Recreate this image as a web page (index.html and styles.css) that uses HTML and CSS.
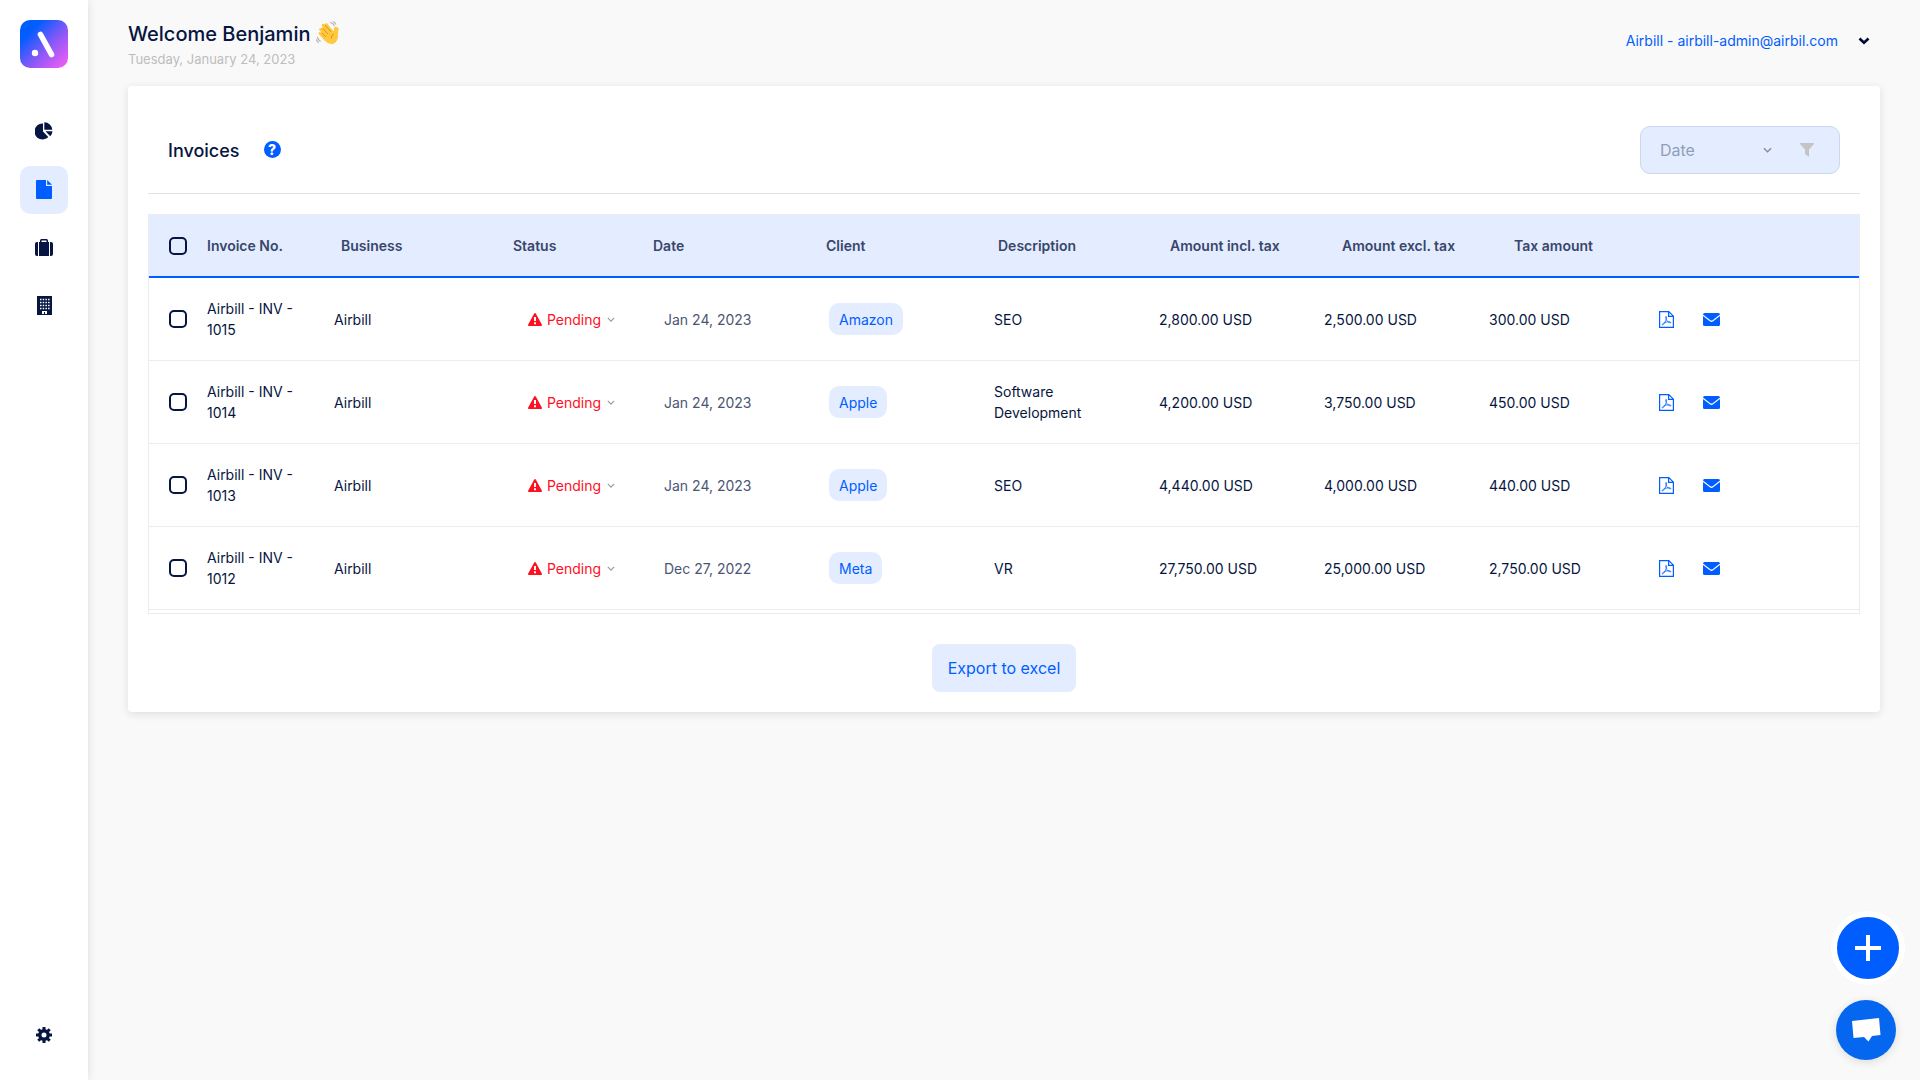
FILE: index.html
```html
<!DOCTYPE html>
<html lang="en">
<head>
<meta charset="utf-8">
<meta name="viewport" content="width=device-width, initial-scale=1">
<title>Airbill - Invoices</title>
<link rel="stylesheet" href="styles.css">
</head>
<body>
<svg class="sprite" aria-hidden="true">
  <symbol id="caret" viewBox="0 0 10 6"><path d="M1 1l4 4 4-4" fill="none" stroke="currentColor" stroke-width="1.5"/></symbol>
  <symbol id="warning" viewBox="0 0 14 13"><path d="M6.2.6Q7-.6 7.800.6L13.800 11.500Q14.200 13 13 13H1Q-.2 13 .2 11.500Z" fill="currentColor"/><path d="M6 4h2v4H6zM6 9.200h2v2H6z" fill="#fff"/></symbol>
  <symbol id="pdf" viewBox="0 0 15 17"><path d="M.6.6h9.200l4.600 4.600v11.200H.6zM9.600.6v4.800h4.800" fill="none" stroke="currentColor" stroke-width="1.200"/><path d="M7 5.500c1.300 0 .2 3.400-1 5.600-1.100 2-2.200 3.300-2.700 2.700-.5-.7 2-2.300 4.400-2.800 2.200-.5 4.200-.3 4.200.5 0 1-2.900-.1-4-1.900C7 8 6.200 5.500 7 5.500z" fill="none" stroke="currentColor" stroke-width=".8"/></symbol>
  <symbol id="mail" viewBox="0 0 17 13"><path d="M1.500 0h14A1.500 1.500 0 0 1 17 1.500L9.600 7.200Q8.500 8 7.400 7.200L0 1.500A1.500 1.500 0 0 1 1.500 0z" fill="currentColor"/><path d="M0 3l6.800 5.300q1.700 1.200 3.400 0L17 3v8.500a1.500 1.500 0 0 1-1.500 1.500h-14A1.500 1.500 0 0 1 0 11.500z" fill="currentColor"/></symbol>
</svg>
<div class="app">
  <aside class="sidebar">
    <a class="logo" href="#" aria-label="Airbill home">
      <svg viewBox="0 0 48 48" width="48" height="48"><path d="M20.500 14.500L31.500 34.500" stroke="#fff" stroke-width="5.600" stroke-linecap="round"/><circle cx="15" cy="33" r="3.200" fill="#fff"/></svg>
    </a>
    <nav class="nav" aria-label="Main">
      <a class="nav-item" href="#" aria-label="Dashboard"><svg viewBox="0 0 18 18" width="18" height="18" fill="currentColor"><path d="M8 1.500V9.400l5.300 5.600A8 8 0 1 1 8 1.500z"/><path d="M9.300.2a8 8 0 0 1 8 7.600H9.300zM10.500 9.200h7a8 8 0 0 1-2.300 5z"/></svg></a>
      <a class="nav-item active" href="#" aria-label="Invoices" aria-current="page"><svg viewBox="0 0 16 19" width="16" height="19" fill="currentColor"><path d="M1 0h9v6h6v12a1 1 0 0 1-1 1H1a1 1 0 0 1-1-1V1a1 1 0 0 1 1-1z"/><path d="M11.200 0L16 4.800h-4.800z"/></svg></a>
      <a class="nav-item" href="#" aria-label="Business"><svg viewBox="0 0 18 17" width="18" height="17" fill="currentColor"><path d="M5 3V1.500Q5 0 6.500 0h5Q13 0 13 1.500V3h1v14H4V3zM6.500 3h5V1.500h-5z" fill-rule="evenodd"/><path d="M3 3v14H2a2 2 0 0 1-2-2V5a2 2 0 0 1 2-2zM15 3h1a2 2 0 0 1 2 2v10a2 2 0 0 1-2 2h-1z"/></svg></a>
      <a class="nav-item" href="#" aria-label="Clients"><svg viewBox="0 0 15 19" width="15" height="19"><path d="M0 0h15v19H0z" fill="currentColor"/><path d="M3 3.500h10M3 6.500h10M3 9.500h10M3 12.500h10" stroke="#fff" stroke-width="1.500" stroke-dasharray="1.500 1.200"/><path d="M5 15h5v3H5z" fill="#fff"/><path d="M7 16h1v2H7z" fill="currentColor"/></svg></a>
    </nav>
    <a class="nav-item settings" href="#" aria-label="Settings"><svg viewBox="0 0 16 16" width="16" height="16"><circle cx="8" cy="8" r="4.200" fill="none" stroke="currentColor" stroke-width="3.400"/><path d="M8 0v3M8 13v3M0 8h3M13 8h3M2.300 2.300l2 2M11.700 11.700l2 2M13.700 2.300l-2 2M4.300 11.700l-2 2" stroke="currentColor" stroke-width="3"/></svg></a>
  </aside>
  <main class="main">
    <header class="topbar">
      <div>
        <h1 class="welcome">Welcome Benjamin
          <svg class="wave" viewBox="0 0 24 24" width="24" height="24" aria-hidden="true"><path d="M4.200 7.500Q5.200 6 6.700 7.300L5.900 3.900Q6.300 2.200 8 3L9 3.700Q9.200 1.500 11 2.200L17.300 10.200Q18.200 9.600 18 7.100 18.500 5.300 20.600 6L23 7.500Q21.300 10 22 14.200 22.500 20 17.500 22.700 12.500 24 8.600 19.600L3 13.200Q1.800 11.600 3.500 11L5.900 12 2.900 8.600Q2.800 7.300 4.200 7.500z" fill="#ffc83d"/><path d="M6.700 7.300l5.200 5.800M8.900 3.800l6.200 7.200M5.500 11.700l4.300 4.200M18 13q-3 .8-2.600 4.400" fill="none" stroke="#d98c17" stroke-width=".9"/><path d="M14.400 1.400q3 .8 4 3.600M17 .5q2 .9 3 3M1.200 16q.8 3 3.400 4.500M.2 18.500q.9 2.200 2.600 3.200" fill="none" stroke="#b5b5b5" stroke-width="1.200"/></svg>
        </h1>
        <p class="today">Tuesday, January 24, 2023</p>
      </div>
      <button class="account" type="button">Airbill - airbill-admin@airbil.com
        <svg viewBox="0 0 12 8" width="12" height="8"><path d="M1.500 1.500L6 5.800l4.500-4.300" fill="none" stroke="#000833" stroke-width="2.600"/></svg>
      </button>
    </header>
    <section class="card">
      <div class="card-head">
        <h2 class="card-title">Invoices</h2>
        <button class="help" type="button" aria-label="Help">?</button>
        <div class="filter">
          <label class="filter-field"><select class="filter-select" aria-label="Filter by"><option>Date</option></select><svg class="caret" width="9" height="6"><use href="#caret"/></svg></label>
          <button class="filter-button" type="button" aria-label="Apply filter"><svg viewBox="0 0 14 14" width="14" height="14"><path d="M.5 0h13q.9.600 0 1.500L9 6.500V14l-4-3V6.500L.5 1.500Q-.4.600.5 0z" fill="#c4c4c4"/></svg></button>
        </div>
      </div>
      <div class="table-wrap">
        <table class="invoices">
          <thead>
            <tr>
              <th><input class="check" type="checkbox" aria-label="Select all invoices"></th>
              <th>Invoice No.</th><th>Business</th><th>Status</th><th>Date</th><th>Client</th><th>Description</th><th>Amount incl. tax</th><th>Amount excl. tax</th><th>Tax amount</th>
            </tr>
          </thead>
          <tbody>
            <tr>
              <td><input class="check" type="checkbox" aria-label="Select invoice 1015"></td>
              <td class="number">Airbill - INV - 1015</td><td>Airbill</td>
              <td><label class="status"><svg width="14" height="13"><use href="#warning"/></svg><select class="status-select" aria-label="Status"><option>Pending</option></select><svg class="caret" width="8" height="5"><use href="#caret"/></svg></label></td>
              <td class="date">Jan 24, 2023</td><td><span class="client">Amazon</span></td><td>SEO</td><td>2,800.00 USD</td><td>2,500.00 USD</td><td>300.00 USD</td>
              <td class="actions"><a href="#" aria-label="Download PDF"><svg width="15" height="17"><use href="#pdf"/></svg></a><a href="#" aria-label="Send email"><svg width="17" height="13"><use href="#mail"/></svg></a></td>
            </tr>
            <tr>
              <td><input class="check" type="checkbox" aria-label="Select invoice 1014"></td>
              <td class="number">Airbill - INV - 1014</td><td>Airbill</td>
              <td><label class="status"><svg width="14" height="13"><use href="#warning"/></svg><select class="status-select" aria-label="Status"><option>Pending</option></select><svg class="caret" width="8" height="5"><use href="#caret"/></svg></label></td>
              <td class="date">Jan 24, 2023</td><td><span class="client">Apple</span></td><td class="description">Software Development</td><td>4,200.00 USD</td><td>3,750.00 USD</td><td>450.00 USD</td>
              <td class="actions"><a href="#" aria-label="Download PDF"><svg width="15" height="17"><use href="#pdf"/></svg></a><a href="#" aria-label="Send email"><svg width="17" height="13"><use href="#mail"/></svg></a></td>
            </tr>
            <tr>
              <td><input class="check" type="checkbox" aria-label="Select invoice 1013"></td>
              <td class="number">Airbill - INV - 1013</td><td>Airbill</td>
              <td><label class="status"><svg width="14" height="13"><use href="#warning"/></svg><select class="status-select" aria-label="Status"><option>Pending</option></select><svg class="caret" width="8" height="5"><use href="#caret"/></svg></label></td>
              <td class="date">Jan 24, 2023</td><td><span class="client">Apple</span></td><td>SEO</td><td>4,440.00 USD</td><td>4,000.00 USD</td><td>440.00 USD</td>
              <td class="actions"><a href="#" aria-label="Download PDF"><svg width="15" height="17"><use href="#pdf"/></svg></a><a href="#" aria-label="Send email"><svg width="17" height="13"><use href="#mail"/></svg></a></td>
            </tr>
            <tr>
              <td><input class="check" type="checkbox" aria-label="Select invoice 1012"></td>
              <td class="number">Airbill - INV - 1012</td><td>Airbill</td>
              <td><label class="status"><svg width="14" height="13"><use href="#warning"/></svg><select class="status-select" aria-label="Status"><option>Pending</option></select><svg class="caret" width="8" height="5"><use href="#caret"/></svg></label></td>
              <td class="date">Dec 27, 2022</td><td><span class="client">Meta</span></td><td>VR</td><td>27,750.00 USD</td><td>25,000.00 USD</td><td>2,750.00 USD</td>
              <td class="actions"><a href="#" aria-label="Download PDF"><svg width="15" height="17"><use href="#pdf"/></svg></a><a href="#" aria-label="Send email"><svg width="17" height="13"><use href="#mail"/></svg></a></td>
            </tr>
          </tbody>
        </table>
      </div>
      <button class="export" type="button">Export to excel</button>
    </section>
  </main>
</div>
<div class="floating">
  <button class="fab add" type="button" aria-label="New invoice"><svg viewBox="0 0 26 26" width="26" height="26"><path d="M13 0v26M0 13h26" stroke="#fff" stroke-width="4"/></svg></button>
  <button class="fab chat" type="button" aria-label="Open chat"><svg viewBox="0 0 30 26" width="30" height="26"><path d="M1 4L28 1l1.500 17-8.500 1-3.500 5.500-4.500-4.500-10.500 1z" fill="#fff"/></svg></button>
</div>
</body>
</html>
```
FILE: styles.css
```css
:root {
  --blue: #005dff;
  --pale: #e4edff;
  --navy: #061541;
  --line: #ececee;
}
* { box-sizing: border-box; }
body {
  margin: 0;
  background: #f9f9f9;
  color: var(--navy);
  font-family: Inter, "Noto Sans", sans-serif;
  font-size: 14px;
  line-height: 21px;
}
button, select, input { font: inherit; color: inherit; margin: 0; }
button { border: 0; padding: 0; background: none; cursor: pointer; }
a { color: inherit; text-decoration: none; }
svg { display: block; flex: none; }
.sprite { position: absolute; width: 0; height: 0; }
.app { display: flex; min-height: 100vh; }

.sidebar {
  display: flex;
  flex-direction: column;
  align-items: center;
  flex: none;
  width: 88px;
  padding: 20px;
  background: #fff;
  box-shadow: 0 0 8px rgba(60, 10, 20, .13);
}
.logo {
  border-radius: 10px;
  background: linear-gradient(135deg, #005dff 22%, #8a58f8 58%, #e85cf5 92%);
}
.nav { display: flex; flex-direction: column; gap: 10px; margin-top: 40px; }
.nav-item {
  display: flex;
  align-items: center;
  justify-content: center;
  width: 48px;
  height: 48px;
  padding-bottom: 2px;
  border-radius: 10px;
}
.nav-item.active { background: var(--pale); color: var(--blue); }
.settings { margin-top: auto; }

.main { flex: 1; min-width: 0; padding: 20px 40px 40px; }
.topbar { display: flex; justify-content: space-between; height: 66px; }
.welcome {
  display: flex;
  align-items: center;
  gap: 6px;
  margin: 0;
  font-size: 20px;
  line-height: 28px;
  font-weight: 500;
}
.wave { margin-bottom: 2px; }
.today { margin: 0; font-size: 13px; line-height: 22px; color: #bdbdbd; }
.account {
  display: flex;
  align-items: center;
  gap: 20px;
  align-self: flex-start;
  padding: 10px;
  color: var(--blue);
}

.card {
  display: flex;
  flex-direction: column;
  padding: 20px;
  background: #fff;
  border-radius: 4px;
  box-shadow: 0 2px 8px rgba(60, 10, 20, .12);
}
.card-head {
  display: flex;
  align-items: center;
  gap: 24px;
  height: 88px;
  padding: 0 20px;
  border-bottom: 1px solid #e3e3e5;
}
.card-title { margin: 0; padding-top: 2px; font-size: 18px; font-weight: 500; line-height: 26px; }
.help {
  width: 17px;
  height: 17px;
  border-radius: 50%;
  background: var(--blue);
  color: #fff;
  font-size: 14px;
  line-height: 17px;
  font-weight: 800;
}
.filter {
  display: flex;
  align-items: center;
  justify-content: space-between;
  width: 200px;
  height: 48px;
  margin-left: auto;
  padding: 0 25px 0 19px;
  border: 1px solid #cbd8ee;
  border-radius: 10px;
  background: var(--pale);
}
.filter-field { display: flex; align-items: center; color: #8b8b8b; }
.filter-select {
  width: 103px;
  appearance: none;
  border: 0;
  padding: 0;
  background: none;
  font-size: 16px;
  line-height: 24px;
  color: #919db8;
}

.table-wrap { margin-top: 20px; padding-bottom: 3px; border: 1px solid var(--line); overflow: hidden; }
.invoices, .invoices thead, .invoices tbody { display: block; }
.invoices tr { display: grid; align-items: center; }
.invoices thead tr {
  grid-template-columns: 58px 134fr 172fr 140fr 173fr 172fr 172fr 172fr 172fr 345fr;
  height: 63px;
  background: var(--pale);
  border-bottom: 2px solid var(--blue);
}
.invoices tbody tr {
  grid-template-columns: 58px 127fr repeat(8, 165fr) 205fr;
  height: 83px;
  border-bottom: 1px solid var(--line);
}
.invoices th { padding: 0; text-align: left; font-weight: 600; color: #39466b; }
.invoices td { padding: 0; }
.invoices th:first-child, .invoices td:first-child { padding-left: 20px; }
.check {
  display: block;
  appearance: none;
  width: 18px;
  height: 18px;
  border: 2px solid var(--navy);
  border-radius: 5px;
}
.check:checked { background: var(--blue); }
.invoices .number { padding-right: 36px; }
.invoices .description { padding-right: 60px; }
.date { color: #4b5674; }
.status { display: flex; align-items: center; gap: 5px; padding-left: 29px; color: #ff0f1f; }
.status .caret { color: #9a9a9a; }
.status-select { appearance: none; border: 0; padding: 0; background: none; }
.client {
  display: inline-block;
  padding: 6px 10px 5px;
  border-radius: 10px;
  background: var(--pale);
  color: var(--blue);
}
.actions { display: flex; align-items: center; gap: 29px; color: var(--blue); }
.invoices .actions { padding-left: 5px; }
.export {
  align-self: center;
  height: 48px;
  margin-top: 30px;
  padding: 0 16px;
  border-radius: 8px;
  background: var(--pale);
  color: var(--blue);
  font-size: 16px;
}

.floating {
  position: fixed;
  right: 15px;
  bottom: 20px;
  display: flex;
  flex-direction: column;
  align-items: center;
  gap: 15px;
}
.fab { display: flex; align-items: center; justify-content: center; border-radius: 50%; }
.add { width: 74px; height: 74px; border: 6px solid #fff; background: var(--blue); }
.chat { width: 60px; height: 60px; margin-right: 4px; background: #0566f0; box-shadow: 0 2px 10px rgba(0, 0, 0, .12); }
```
